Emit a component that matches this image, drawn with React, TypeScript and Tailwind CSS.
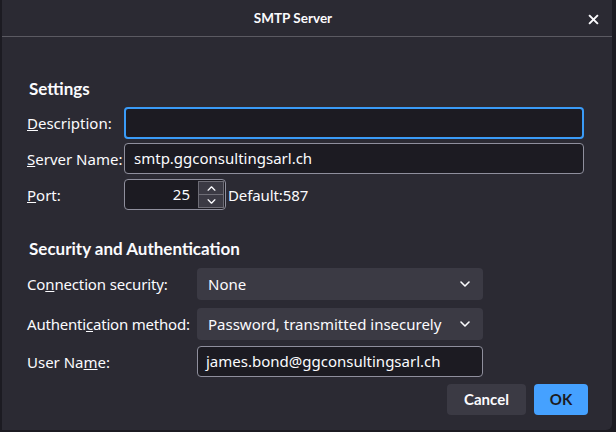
import React from 'react';

const Chevron = ({ up = false, className = '' }: { up?: boolean; className?: string }) => (
  <svg viewBox="0 0 10 6" className={className} fill="none" stroke="currentColor" strokeWidth="1.6" strokeLinecap="round" strokeLinejoin="round">
    {up ? <path d="M1 5 L5 1 L9 5" /> : <path d="M1 1 L5 5 L9 1" />}
  </svg>
);

const Label = ({ children, className = '' }: { children: React.ReactNode; className?: string }) => (
  <span className={`text-[15px] leading-5 text-[#fbfbfe] ${className}`}>{children}</span>
);

const SelectBox = ({ value }: { value: string }) => (
  <div className="flex h-[32px] w-[286px] items-center justify-between rounded-[4px] bg-[#3b3a44] pl-[11px] pr-[13px]">
    <span className="text-[15px] text-[#fbfbfe]">{value}</span>
    <Chevron className="h-[6px] w-[10px] text-[#fbfbfe]" />
  </div>
);

export default function App() {
  return (
    <div className="h-[432px] w-[616px] bg-[#1c1b22] font-['Noto_Sans',sans-serif]">
      <div className="ml-[2px] flex h-[430px] w-[610px] flex-col rounded-br-[6px] bg-[#2b2a33]">
        {/* title bar */}
        <div className="relative flex h-[37px] shrink-0 items-center justify-center border-b border-[#5b5a62] pr-[28px]">
          <span className="font-['Lato',sans-serif] text-[13.5px] font-bold text-[#fbfbfe]">SMTP Server</span>
          <svg viewBox="0 0 10 10" className="absolute right-[13px] top-[14px] h-[11px] w-[11px] text-[#fbfbfe]" stroke="currentColor" strokeWidth="1.8">
            <path d="M1 1 L9 9 M9 1 L1 9" />
          </svg>
        </div>

        <div className="flex flex-col pl-[25px]">
          <h2 className="mt-[41px] pl-[2px] font-['Lato',sans-serif] text-[17px] font-bold leading-[22px] text-[#fbfbfe]">Settings</h2>

          <div className="mt-[7px] flex items-center">
            <Label className="w-[97px]"><u>D</u>escription:</Label>
            <div className="h-[32px] w-[460px] rounded-[4px] border-2 border-[#3a9bf7] bg-[#1c1b22]" />
          </div>

          <div className="mt-[4px] flex items-center">
            <Label className="w-[97px]"><u>S</u>erver Name:</Label>
            <div className="flex h-[31px] w-[460px] items-center rounded-[4px] border border-[#8f8f9d] bg-[#1c1b22] pl-[9px]">
              <span className="text-[15px] text-[#fbfbfe]">smtp.ggconsultingsarl.ch</span>
            </div>
          </div>

          <div className="mt-[5px] flex items-center">
            <Label className="w-[97px]"><u>P</u>ort:</Label>
            <div className="flex h-[31px] w-[102px] items-center justify-end rounded-[4px] border border-[#8f8f9d] bg-[#1c1b22] pr-[1px]">
              <span className="mr-[8px] text-[15px] text-[#fbfbfe]">25</span>
              <div className="flex h-[27px] w-[26px] flex-col border border-[#6e6d76] bg-[#3b3a44]">
                <div className="flex flex-1 items-center justify-center border-b border-[#6e6d76]">
                  <Chevron up className="h-[5px] w-[9px] text-[#fbfbfe]" />
                </div>
                <div className="flex flex-1 items-center justify-center">
                  <Chevron className="h-[5px] w-[9px] text-[#fbfbfe]" />
                </div>
              </div>
            </div>
            <Label className="ml-[2px] tracking-[-0.1px]">Default:587</Label>
          </div>

          <h2 className="mt-[28px] pl-[2px] font-['Lato',sans-serif] text-[17px] font-bold leading-[22px] text-[#fbfbfe]">Security and Authentication</h2>

          <div className="mt-[8px] flex items-center">
            <Label className="w-[170px] tracking-[-0.15px]">Co<u>n</u>nection security:</Label>
            <SelectBox value="None" />
          </div>

          <div className="mt-[8px] flex items-center">
            <Label className="w-[170px] tracking-[-0.2px]">Authenti<u>c</u>ation method:</Label>
            <SelectBox value="Password, transmitted insecurely" />
          </div>

          <div className="mt-[6px] flex items-center">
            <Label className="w-[170px]">User Na<u>m</u>e:</Label>
            <div className="flex h-[31px] w-[286px] items-center rounded-[4px] border border-[#8f8f9d] bg-[#1c1b22] pl-[8px]">
              <span className="text-[15px] text-[#fbfbfe]">james.bond@ggconsultingsarl.ch</span>
            </div>
          </div>
        </div>

        <div className="mt-[7px] flex justify-end gap-[8px] pr-[24px]">
          <button className="h-[31px] w-[79px] rounded-[4px] bg-[#3b3a44] font-['Lato',sans-serif] text-[15px] font-bold text-[#fbfbfe]">Cancel</button>
          <button className="h-[31px] w-[54px] rounded-[4px] bg-[#45a1ff] font-['Lato',sans-serif] text-[15px] font-bold text-[#1c1b22]">OK</button>
        </div>
      </div>
    </div>
  );
}
